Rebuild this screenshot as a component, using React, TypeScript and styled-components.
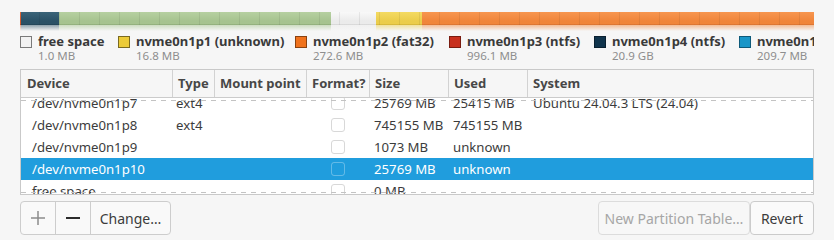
import React from 'react'
import styled, { createGlobalStyle } from 'styled-components'

const GlobalStyle = createGlobalStyle`
  html, body {
    margin: 0;
    padding: 0;
    background: #f6f6f6;
  }
  body {
    font-family: 'Noto Sans', 'DejaVu Sans', sans-serif;
    color: #3c3c3c;
  }
`

const Page = styled.div`
  width: 834px;
  height: 240px;
  box-sizing: border-box;
  padding: 12px 20px 0 20px;
  display: flex;
  flex-direction: column;
  overflow: hidden;
`

/* 파티션 막대 */
const Bar = styled.div`
  position: relative;
  display: flex;
  height: 13px;
  width: 794px;

  &::before {
    content: '';
    position: absolute;
    inset: 0 0 0 0;
    background: repeating-linear-gradient(
      90deg,
      transparent 0 19px,
      rgba(0, 0, 0, 0.07) 19px 20px
    );
    z-index: 2;
    pointer-events: none;
  }
`

const Segment = styled.div<{ $w?: number; $top: string; $base: string; $edge: string }>`
  position: relative;
  flex: ${(p) => (p.$w ? `0 0 ${p.$w}px` : '1 1 auto')};
  background: linear-gradient(to bottom, ${(p) => p.$top} 0%, ${(p) => p.$base} 75%);
  border-bottom: 1px solid ${(p) => p.$edge};
  box-sizing: border-box;

  &::after {
    content: '';
    position: absolute;
    left: 0;
    right: 0;
    top: 100%;
    height: 7px;
    background: linear-gradient(to bottom, ${(p) => p.$base}99, ${(p) => p.$base}00);
  }
`

/* 범례 */
const Legend = styled.div`
  display: flex;
  height: 36px;
  width: 794px;
  margin-top: 8px;
  overflow: hidden;
`

const LegendItem = styled.div<{ $w: number }>`
  flex: 0 0 ${(p) => p.$w}px;
  display: flex;
  align-items: flex-start;
  white-space: nowrap;
`

const Swatch = styled.div<{ $color: string; $edge: string }>`
  flex: none;
  width: 12px;
  height: 12px;
  box-sizing: border-box;
  margin: 3px 6px 0 0;
  background: ${(p) => p.$color};
  border: 1px solid ${(p) => p.$edge};
`

const LegendText = styled.div`
  display: flex;
  flex-direction: column;
`

const LegendName = styled.span`
  font-size: 13px;
  font-weight: 700;
  line-height: 16px;
  color: #3a3a3a;
`

const LegendSize = styled.span`
  font-size: 11.5px;
  line-height: 14px;
  color: #8e8e8e;
`

/* 테이블 */
const columns = '151px 42px 92px 63px 79px 79px 1fr'

const Table = styled.div`
  width: 794px;
  box-sizing: border-box;
  border: 1px solid #c9c9c9;
  background: #ffffff;
`

const HeaderRow = styled.div`
  display: grid;
  grid-template-columns: ${columns};
  height: 28px;
  box-sizing: border-box;
  background: #f6f6f6;
  border-bottom: 1px solid #cbcbcb;
`

const HeaderCell = styled.div<{ $first?: boolean }>`
  padding-left: ${(p) => (p.$first ? 6 : 5)}px;
  border-left: ${(p) => (p.$first ? 'none' : '1px solid #d2d2d2')};
  font-size: 13px;
  font-weight: 700;
  line-height: 27px;
  color: #474747;
  white-space: nowrap;
  overflow: hidden;
`

const Body = styled.div`
  position: relative;
  height: 96px;
  overflow: hidden;
`

const Rows = styled.div`
  margin-top: -6px;
`

const Undershoot = styled.div<{ $side: 'top' | 'bottom' }>`
  position: absolute;
  left: 0;
  right: 0;
  ${(p) => (p.$side === 'top' ? 'top: 2px;' : 'bottom: 1px;')}
  height: 1px;
  background: repeating-linear-gradient(90deg, #c3c3c3 0 5px, transparent 5px 10px);
  z-index: 3;
`

const Row = styled.div<{ $selected?: boolean }>`
  display: grid;
  grid-template-columns: ${columns};
  height: 22px;
  line-height: 22px;
  font-size: 13.2px;
  background: ${(p) => (p.$selected ? '#209ddd' : 'transparent')};
  color: ${(p) => (p.$selected ? '#ffffff' : '#3c3c3c')};
`

const Cell = styled.div<{ $pad?: number }>`
  padding-left: ${(p) => p.$pad ?? 5}px;
  white-space: nowrap;
  overflow: hidden;
`

const CheckCell = styled.div`
  display: flex;
  align-items: center;
  justify-content: center;
`

const Check = styled.div<{ $selected?: boolean }>`
  width: 14px;
  height: 14px;
  box-sizing: border-box;
  border-radius: 3px;
  border: 1px solid ${(p) => (p.$selected ? 'rgba(255,255,255,0.3)' : '#d8d8d8')};
  background: ${(p) => (p.$selected ? 'transparent' : '#ffffff')};
`

/* 하단 버튼 */
const Toolbar = styled.div`
  display: flex;
  justify-content: space-between;
  margin-top: 6px;
  width: 794px;
`

const LinkedGroup = styled.div`
  display: flex;
  height: 34px;
  box-sizing: border-box;
  border: 1px solid #cdcdcd;
  border-radius: 4px;
  overflow: hidden;
  background: #f9f9f9;
`

const GroupButton = styled.div<{ $w: number; $first?: boolean }>`
  width: ${(p) => p.$w}px;
  box-sizing: border-box;
  border-left: ${(p) => (p.$first ? 'none' : '1px solid #cdcdcd')};
  display: flex;
  align-items: center;
  justify-content: center;
  font-size: 14px;
  color: #3c3c3c;
`

const RightGroup = styled.div`
  display: flex;
`

const Button = styled.div<{ $w: number; $disabled?: boolean }>`
  width: ${(p) => p.$w}px;
  height: 34px;
  box-sizing: border-box;
  border: 1px solid ${(p) => (p.$disabled ? '#dcdcdc' : '#cbcbcb')};
  border-radius: 4px;
  background: ${(p) => (p.$disabled ? '#f7f7f7' : '#fafafa')};
  color: ${(p) => (p.$disabled ? '#a6a6a6' : '#3c3c3c')};
  display: flex;
  align-items: center;
  justify-content: center;
  font-size: 14px;
`

const segments = [
  { w: 1, top: '#e0693c', base: '#d2582a', edge: '#a8421c' },
  { w: 38, top: '#3b6479', base: '#2a5166', edge: '#1b3949' },
  { w: 272, top: '#b6d0a1', base: '#a6c38f', edge: '#7d9b68' },
  { w: 45, top: '#f8f8f8', base: '#ebebeb', edge: '#c4c4c4' },
  { w: 46, top: '#f4da62', base: '#ebcd4a', edge: '#c0a22c' },
  { top: '#f79650', base: '#f0853a', edge: '#c7652a' },
]

const legend = [
  { w: 98, name: 'free space', size: '1.0 MB', color: '#f2f2f2', edge: '#7a7a7a' },
  { w: 177, name: 'nvme0n1p1 (unknown)', size: '16.8 MB', color: '#eccb38', edge: '#7a6a20' },
  { w: 154, name: 'nvme0n1p2 (fat32)', size: '272.6 MB', color: '#f0721c', edge: '#8a4210' },
  { w: 145, name: 'nvme0n1p3 (ntfs)', size: '996.1 MB', color: '#c8301e', edge: '#7a1c10' },
  { w: 145, name: 'nvme0n1p4 (ntfs)', size: '20.9 GB', color: '#10344c', edge: '#0a2030' },
  { w: 120, name: 'nvme0n1p5 (ext4)', size: '209.7 MB', color: '#1a96c8', edge: '#0e5a7a' },
]

const rows = [
  { dev: '/dev/nvme0n1p7', type: 'ext4', size: '25769 MB', used: '25415 MB', system: 'Ubuntu 24.04.3 LTS (24.04)' },
  { dev: '/dev/nvme0n1p8', type: 'ext4', size: '745155 MB', used: '745155 MB', system: '' },
  { dev: '/dev/nvme0n1p9', type: '', size: '1073 MB', used: 'unknown', system: '' },
  { dev: '/dev/nvme0n1p10', type: '', size: '25769 MB', used: 'unknown', system: '', selected: true },
  { dev: 'free space', type: '', size: '0 MB', used: '', system: '' },
]

const headers = ['Device', 'Type', 'Mount point', 'Format?', 'Size', 'Used', 'System']

const PlusIcon = () => (
  <svg width="14" height="14" viewBox="0 0 14 14">
    <rect x="0" y="6.25" width="14" height="1.5" fill="#8c8c8c" />
    <rect x="6.25" y="0" width="1.5" height="14" fill="#8c8c8c" />
  </svg>
)

const MinusIcon = () => (
  <svg width="14" height="14" viewBox="0 0 14 14">
    <rect x="0" y="6" width="14" height="2" fill="#2c2c2c" />
  </svg>
)

const App: React.FC = () => {
  return (
    <>
      <GlobalStyle />
      <Page>
        <Bar>
          {segments.map((s, i) => (
            <Segment key={i} $w={s.w} $top={s.top} $base={s.base} $edge={s.edge} />
          ))}
        </Bar>

        <Legend>
          {legend.map((l) => (
            <LegendItem key={l.name} $w={l.w}>
              <Swatch $color={l.color} $edge={l.edge} />
              <LegendText>
                <LegendName>{l.name}</LegendName>
                <LegendSize>{l.size}</LegendSize>
              </LegendText>
            </LegendItem>
          ))}
        </Legend>

        <Table>
          <HeaderRow>
            {headers.map((h, i) => (
              <HeaderCell key={h} $first={i === 0}>{h}</HeaderCell>
            ))}
          </HeaderRow>
          <Body>
            <Undershoot $side="top" />
            <Rows>
              {rows.map((r) => (
                <Row key={r.dev} $selected={r.selected}>
                  <Cell $pad={11}>{r.dev}</Cell>
                  <Cell $pad={4}>{r.type}</Cell>
                  <Cell />
                  <CheckCell>
                    <Check $selected={r.selected} />
                  </CheckCell>
                  <Cell>{r.size}</Cell>
                  <Cell>{r.used}</Cell>
                  <Cell $pad={6}>{r.system}</Cell>
                </Row>
              ))}
            </Rows>
            <Undershoot $side="bottom" />
          </Body>
        </Table>

        <Toolbar>
          <LinkedGroup>
            <GroupButton $w={34} $first>
              <PlusIcon />
            </GroupButton>
            <GroupButton $w={35}>
              <MinusIcon />
            </GroupButton>
            <GroupButton $w={80}>Change…</GroupButton>
          </LinkedGroup>
          <RightGroup>
            <Button $w={152} $disabled>New Partition Table…</Button>
            <Button $w={64}>Revert</Button>
          </RightGroup>
        </Toolbar>
      </Page>
    </>
  )
}

export default App
